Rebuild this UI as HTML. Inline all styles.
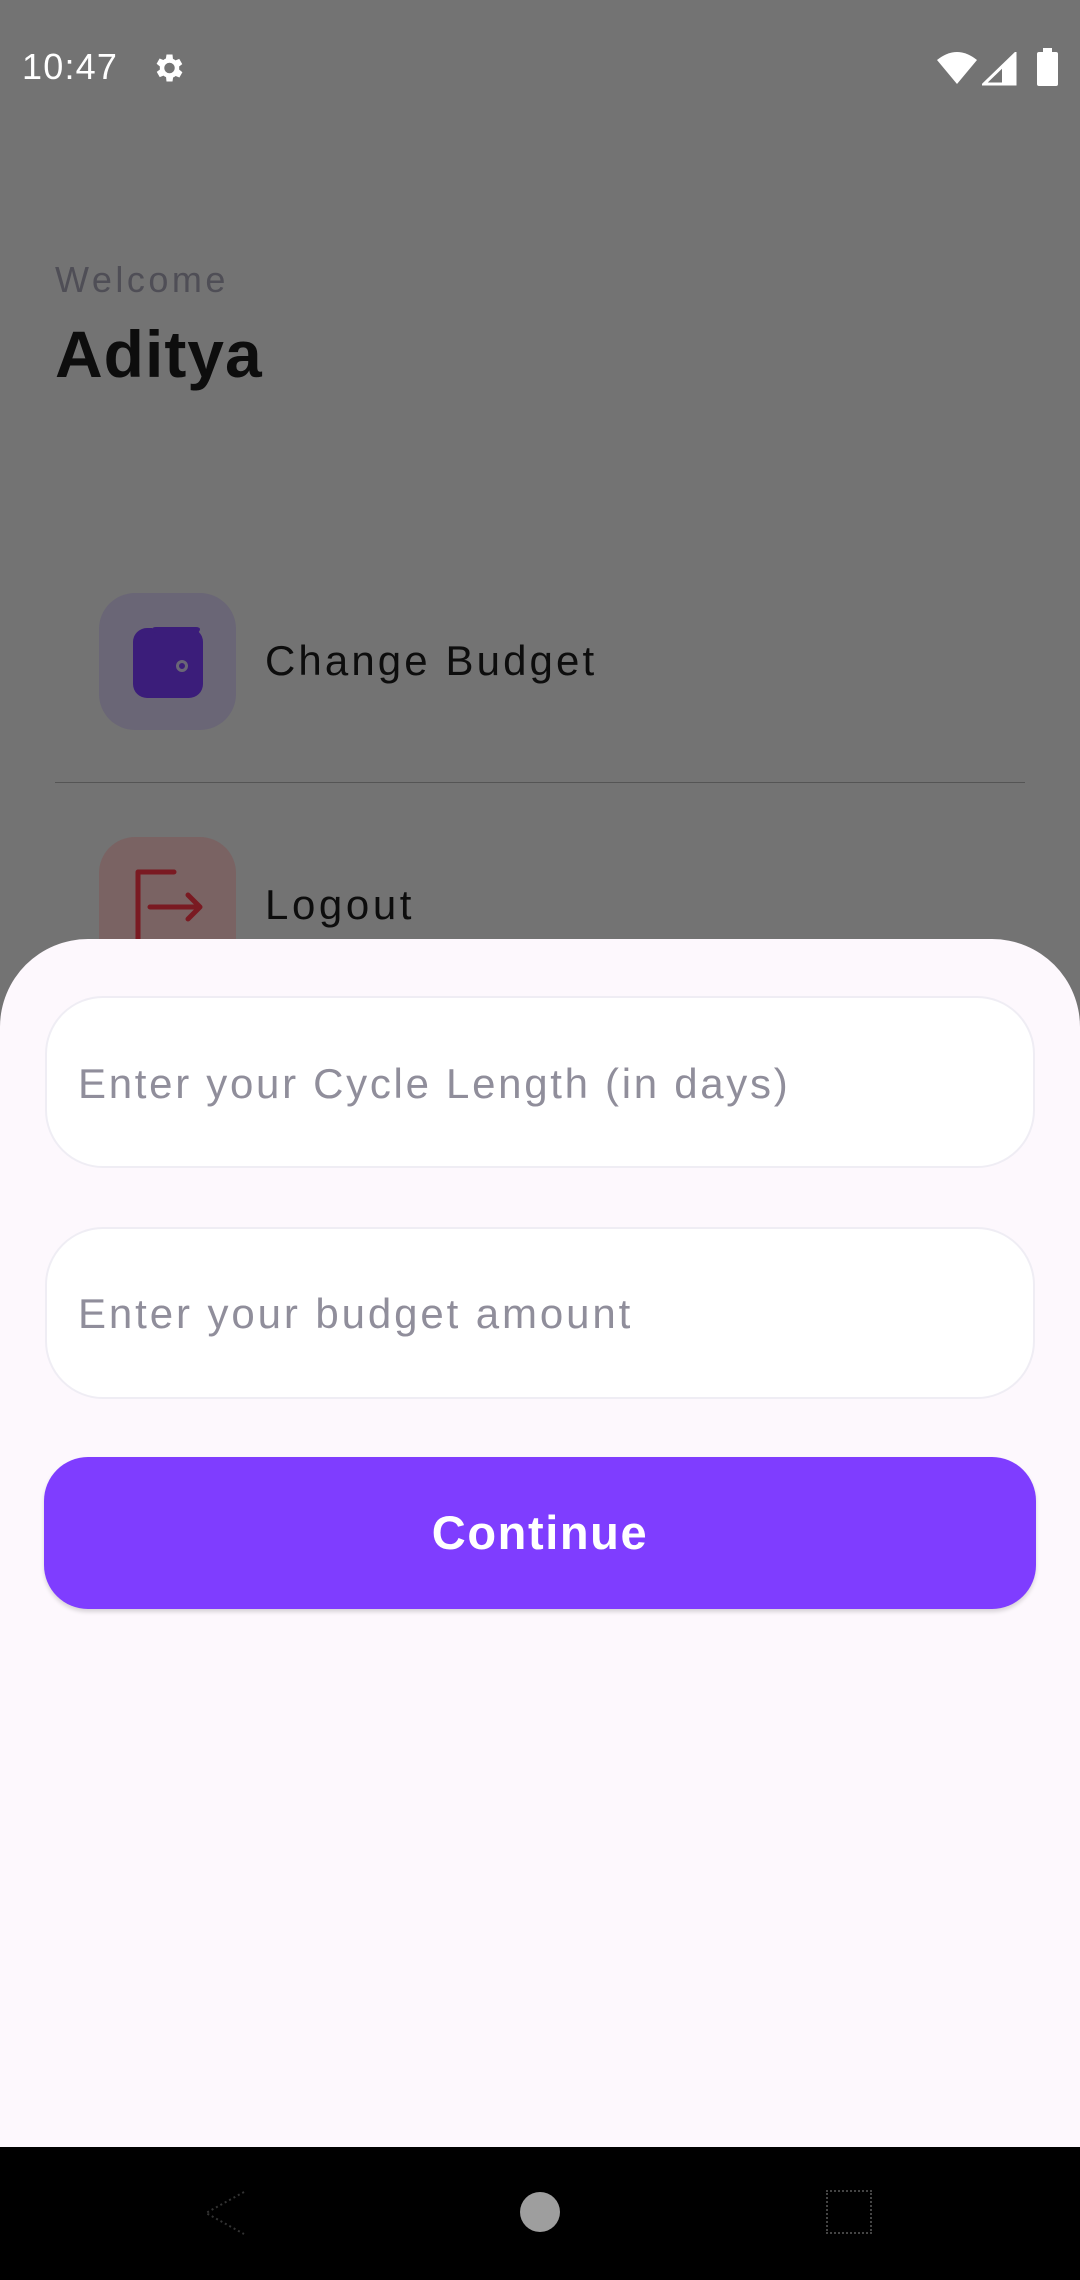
<!DOCTYPE html>
<html><head><meta charset="utf-8"><style>
*{margin:0;padding:0;box-sizing:border-box}
body{width:1080px;height:2280px;overflow:hidden;background:#737373;font-family:"Liberation Sans",sans-serif;position:relative}
.abs{position:absolute}
</style></head><body>
<div class="abs" style="left:22px;top:46px;font-size:36px;color:#fff;letter-spacing:1.2px">10:47</div>
<svg class="abs" style="left:150px;top:50px" width="36" height="36" viewBox="0 0 24 24"><path fill="#fff" d="M19.4 13a7.5 7.5 0 000-2l2.1-1.6-2-3.5-2.5 1a7 7 0 00-1.7-1L15 3h-4l-.4 2.7a7 7 0 00-1.7 1l-2.5-1-2 3.5L6.6 11a7.5 7.5 0 000 2l-2.1 1.6 2 3.5 2.5-1a7 7 0 001.7 1L11 21h4l.4-2.7a7 7 0 001.7-1l2.5 1 2-3.5zM13 15.5a3.5 3.5 0 110-7 3.5 3.5 0 010 7z"/></svg>
<svg class="abs" style="left:937px;top:52px" width="40" height="32" viewBox="0 0 40 32"><path fill="#fff" d="M0 8Q20-8 40 8L20 32z"/></svg>
<svg class="abs" style="left:982px;top:52px" width="36" height="34" viewBox="0 0 36 34"><path fill="none" stroke="#fff" stroke-width="3" d="M2 32L33 2v30z"/><path fill="#fff" d="M20 32V15L33 2v30z"/></svg>
<div class="abs" style="left:1037px;top:52px;width:21px;height:34px;background:#fff;border-radius:2px"></div>
<div class="abs" style="left:1043px;top:48px;width:9px;height:5px;background:#fff"></div>

<div class="abs" style="left:55px;top:259px;font-size:36px;color:#4f4e56;letter-spacing:3.5px">Welcome</div>
<div class="abs" style="left:55px;top:316px;font-size:66px;font-weight:bold;color:#0d0d0d;letter-spacing:1px">Aditya</div>

<div class="abs" style="left:99px;top:593px;width:137px;height:137px;border-radius:36px;background:#6a6676"></div>
<div class="abs" style="left:133px;top:628px;width:70px;height:70px;border-radius:14px;background:#3b1d7a"></div>
<div class="abs" style="left:152px;top:625px;width:48px;height:8px;border-radius:4px;background:#3b1d7a;border-top:2px solid #6a6676"></div>
<div class="abs" style="left:176px;top:660px;width:12px;height:12px;border-radius:50%;border:3px solid #6a6676"></div>
<div class="abs" style="left:265px;top:637px;font-size:42px;color:#0d0d0d;letter-spacing:3.1px">Change Budget</div>
<div class="abs" style="left:55px;top:782px;width:970px;height:1px;background:#555"></div>
<div class="abs" style="left:99px;top:837px;width:137px;height:137px;border-radius:36px;background:#7a6363"></div>
<svg class="abs" style="left:130px;top:868px" width="80" height="80" viewBox="0 0 80 80"><path fill="none" stroke="#7a1a22" stroke-width="5" stroke-linecap="round" stroke-linejoin="round" d="M44 4H8v70h36M20 39h50M58 27l12 12-12 12"/></svg>
<div class="abs" style="left:265px;top:881px;font-size:42px;color:#0d0d0d;letter-spacing:3.6px">Logout</div>

<div class="abs" style="left:0;top:939px;width:1080px;height:1260px;background:#fdf8fd;border-radius:88px 88px 0 0"></div>
<div class="abs" style="left:45px;top:996px;width:990px;height:172px;background:#fff;border:2px solid #efedf4;border-radius:58px"></div>
<div class="abs" style="left:78px;top:1060px;font-size:42px;color:#908e9b;letter-spacing:2.7px">Enter your Cycle Length (in days)</div>
<div class="abs" style="left:45px;top:1227px;width:990px;height:172px;background:#fff;border:2px solid #efedf4;border-radius:58px"></div>
<div class="abs" style="left:78px;top:1290px;font-size:42px;color:#908e9b;letter-spacing:2.9px">Enter your budget amount</div>
<div class="abs" style="left:44px;top:1457px;width:992px;height:152px;background:#7f3dff;border-radius:44px;box-shadow:0 3px 4px rgba(0,0,0,.15);color:#fff;font-size:47px;font-weight:bold;text-align:center;line-height:152px;letter-spacing:1.6px">Continue</div>

<div class="abs" style="left:0;top:2147px;width:1080px;height:133px;background:#000"></div>
<div class="abs" style="left:520px;top:2192px;width:40px;height:40px;border-radius:50%;background:#9e9e9e"></div>
<svg class="abs" style="left:200px;top:2190px" width="50" height="46"><path d="M44 2L6 23l38 21" fill="none" stroke="#333" stroke-width="2" stroke-dasharray="2 3"/></svg>
<div class="abs" style="left:826px;top:2190px;width:46px;height:44px;border:2px dotted #444"></div>
</body></html>
